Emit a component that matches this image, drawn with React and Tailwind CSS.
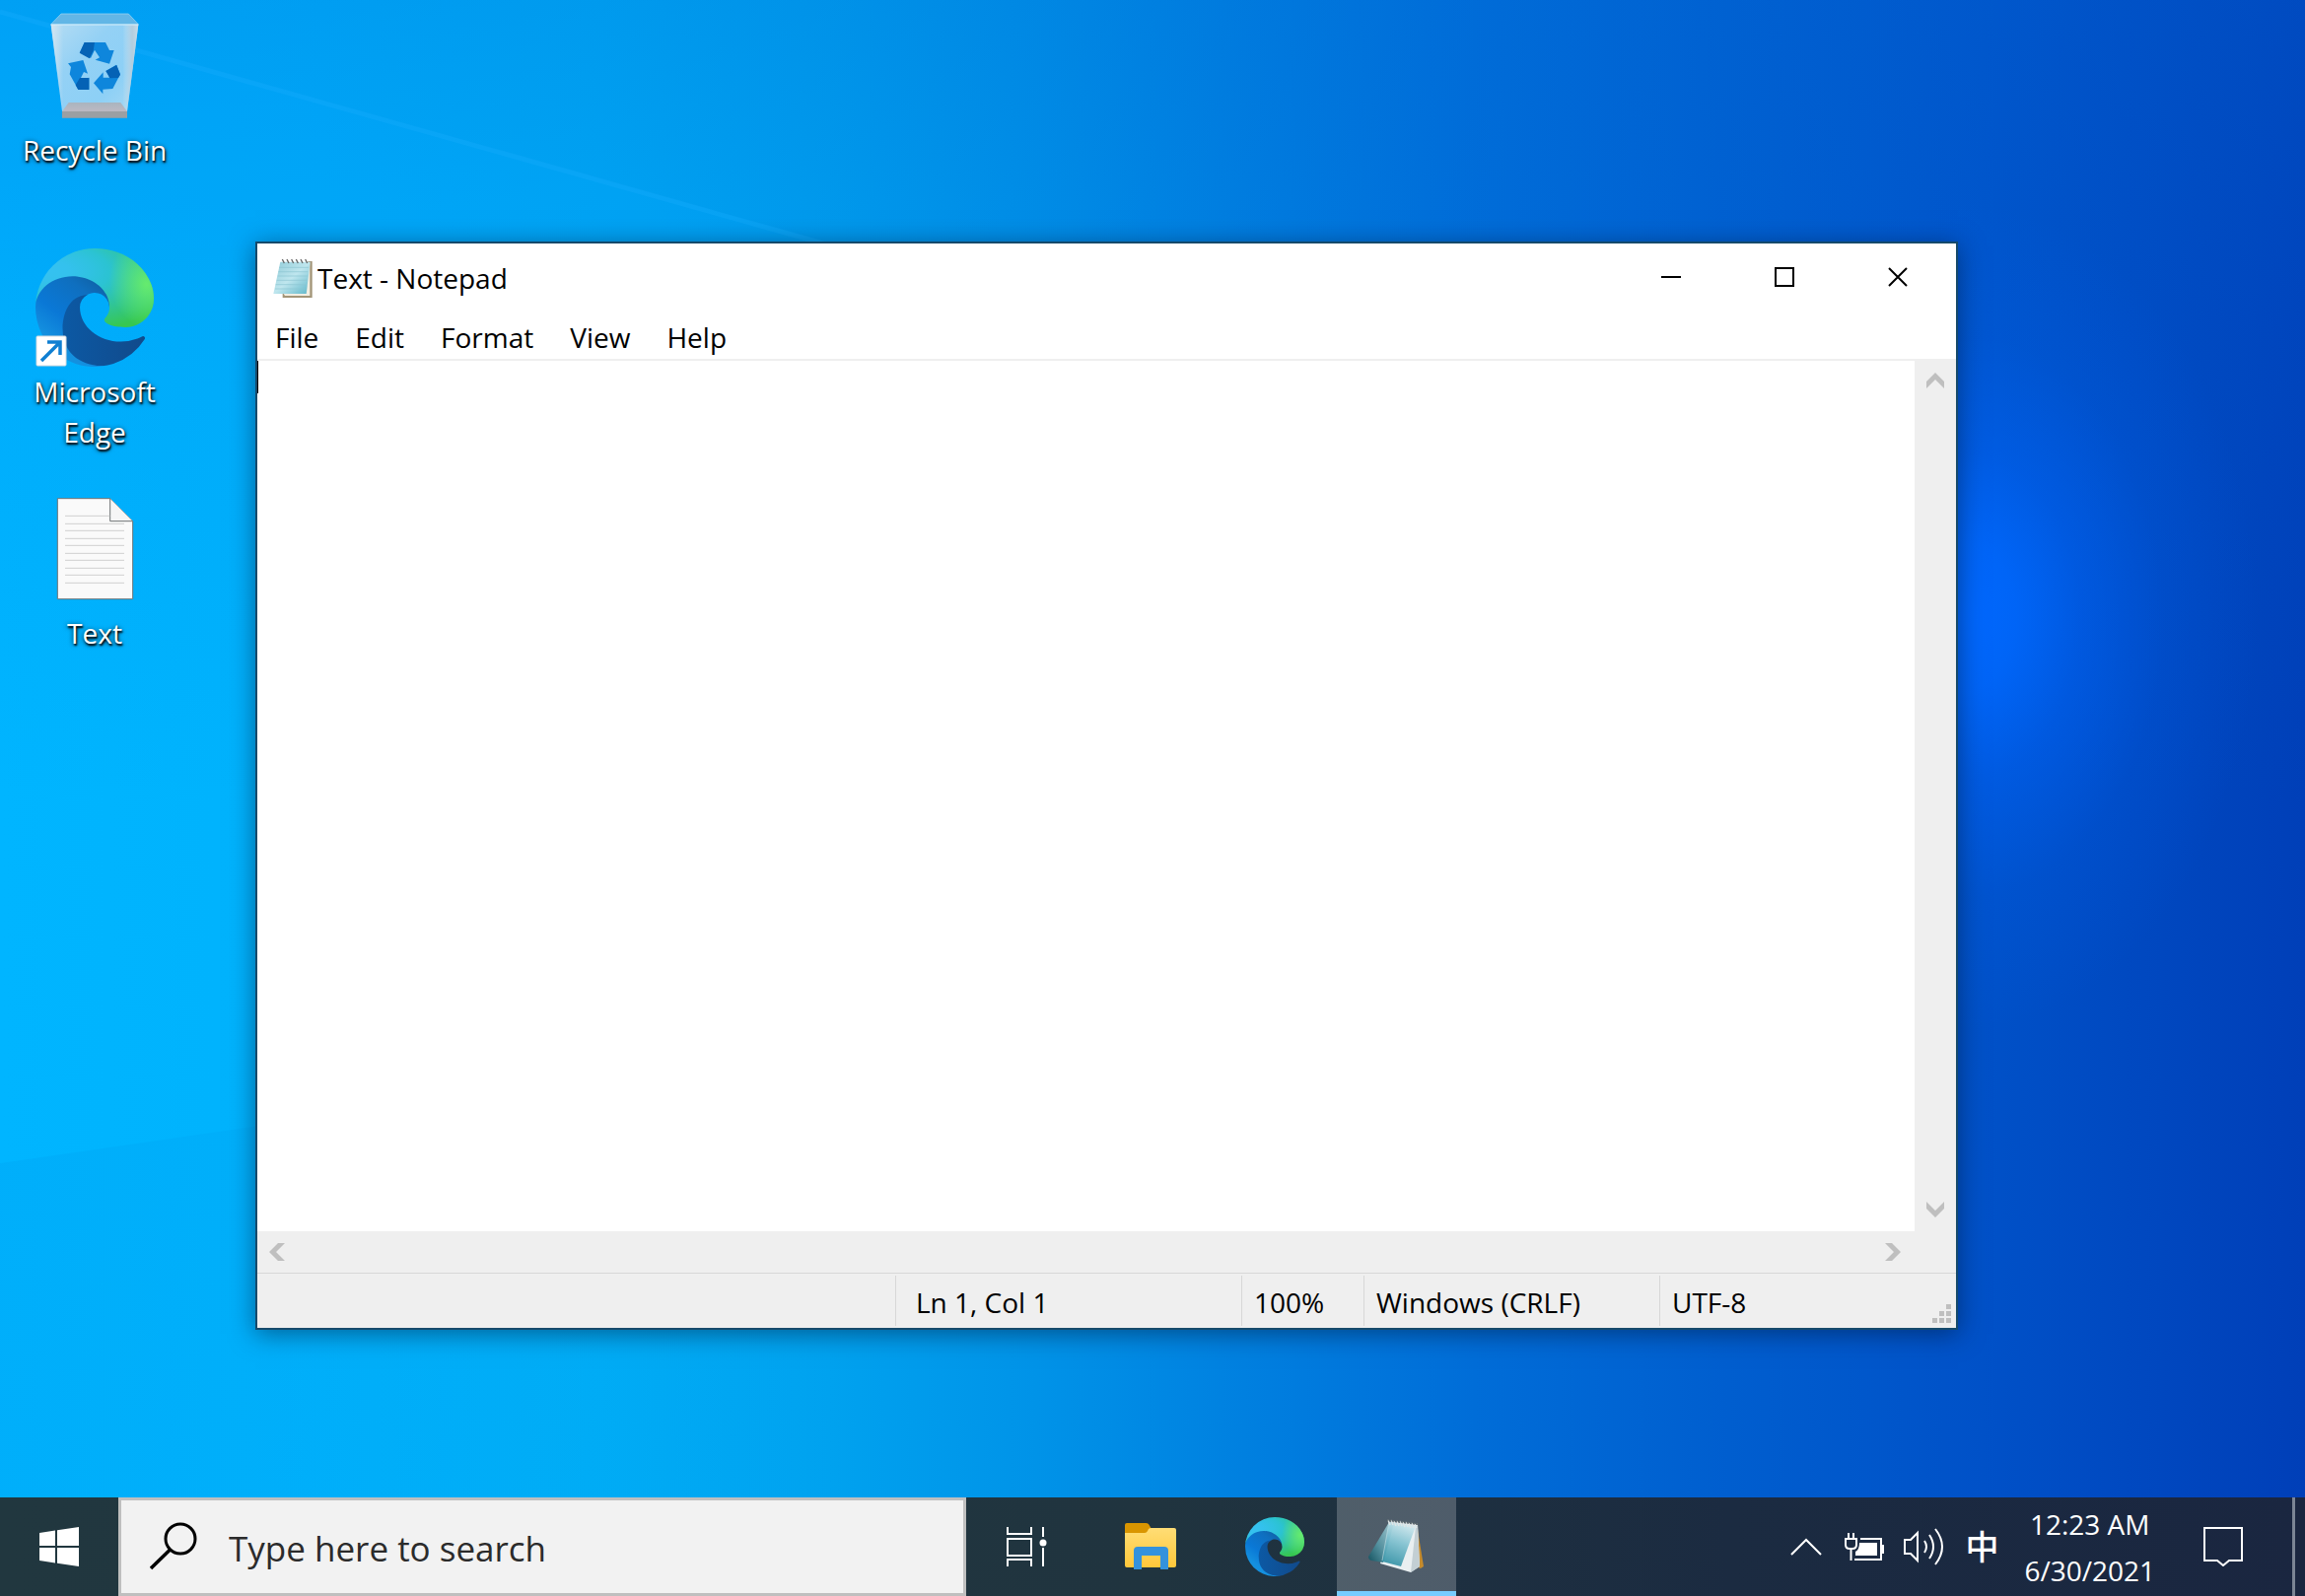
import React from "react";

function EdgeLogo({ id, className }) {
  return (
    <svg viewBox="0 0 256 256" className={className} aria-hidden="true">
      <defs>
        <linearGradient id={id + "a"} gradientUnits="userSpaceOnUse" x1="63" y1="178" x2="241" y2="178">
          <stop offset="0" stopColor="#0c59a4" />
          <stop offset="1" stopColor="#114a8b" />
        </linearGradient>
        <linearGradient id={id + "c"} gradientUnits="userSpaceOnUse" x1="157.4" y1="65" x2="46" y2="208">
          <stop offset="0" stopColor="#0f5c9c" />
          <stop offset=".3" stopColor="#0f6fbf" />
          <stop offset=".7" stopColor="#0a78d6" />
          <stop offset="1" stopColor="#1490df" />
        </linearGradient>
        <radialGradient
          id={id + "d"}
          gradientUnits="userSpaceOnUse"
          cx="113.4"
          cy="570.2"
          r="202.4"
          gradientTransform="matrix(-.04 1 2.13 .08 -1179.5 -106.7)"
        >
          <stop offset="0" stopColor="#35c1f1" />
          <stop offset=".11" stopColor="#34c1ed" />
          <stop offset=".23" stopColor="#2fc2df" />
          <stop offset=".31" stopColor="#2bc3d2" />
          <stop offset=".67" stopColor="#36c752" />
        </radialGradient>
        <radialGradient
          id={id + "e"}
          gradientUnits="userSpaceOnUse"
          cx="376.5"
          cy="568"
          r="97.3"
          gradientTransform="matrix(.28 .96 .78 -.23 -303.8 -148.5)"
        >
          <stop offset="0" stopColor="#66eb6e" />
          <stop offset="1" stopColor="#66eb6e" stopOpacity="0" />
        </radialGradient>
      </defs>
      <g transform="translate(-4.63 -4.92)">
        <path
          fill={"url(#" + id + "c)"}
          d="M110.34 246.34A79.2 79.2 0 0 1 87.6 225a80.72 80.72 0 0 1 29.53-120c3.12-1.47 8.45-4.13 15.54-4a32.35 32.35 0 0 1 25.69 13 31.88 31.88 0 0 1 6.36 18.66c0-.21 24.46-79.6-80-79.6-43.9 0-80 41.66-80 78.21a130.15 130.15 0 0 0 12.11 56 128 128 0 0 0 156.38 67.11 75.55 75.55 0 0 1-62.78-8Z"
        />
        <path
          fill={"url(#" + id + "a)"}
          d="M235.68 195.46a93.73 93.73 0 0 1-10.54 4.71 101.87 101.87 0 0 1-35.9 6.46c-47.32 0-88.54-32.55-88.54-74.32A31.48 31.48 0 0 1 117.13 105c-42.8 1.8-53.8 46.4-53.8 72.53 0 73.88 68.09 81.37 82.76 81.37 7.91 0 19.84-2.3 27-4.56l1.31-.44a128.34 128.34 0 0 0 66.6-52.8 4 4 0 0 0-5.32-5.64Z"
        />
        <path
          fill={"url(#" + id + "d)"}
          d="M156.94 153.78c-.81 1.05-3.3 2.5-3.3 5.66 0 2.61 1.7 5.12 4.72 7.23 14.38 10 41.49 8.68 41.56 8.68a59.56 59.56 0 0 0 30.27-8.35 61.38 61.38 0 0 0 30.43-52.88c.26-22.41-8-37.31-11.34-43.91-21.19-41.44-66.92-65.28-116.64-65.28a128 128 0 0 0-128 126.2c.48-36.54 36.8-66.05 80-66.05 3.5 0 23.46.34 42 10.07 16.34 8.58 24.9 18.94 30.85 29.21 6.18 10.67 7.28 24.15 7.28 29.52s-2.74 13.33-7.83 19.9Z"
        />
        <path
          fill={"url(#" + id + "e)"}
          d="M156.94 153.78c-.81 1.05-3.3 2.5-3.3 5.66 0 2.61 1.7 5.12 4.72 7.23 14.38 10 41.49 8.68 41.56 8.68a59.56 59.56 0 0 0 30.27-8.35 61.38 61.38 0 0 0 30.43-52.88c.26-22.41-8-37.31-11.34-43.91-21.19-41.44-66.92-65.28-116.64-65.28a128 128 0 0 0-128 126.2c.48-36.54 36.8-66.05 80-66.05 3.5 0 23.46.34 42 10.07 16.34 8.58 24.9 18.94 30.85 29.21 6.18 10.67 7.28 24.15 7.28 29.52s-2.74 13.33-7.83 19.9Z"
        />
      </g>
    </svg>
  );
}

function RecycleBinIcon() {
  return (
    <svg viewBox="108 21 360 360" className="size-[120px]" aria-hidden="true">
      <defs>
        <linearGradient id="binFront" x1="0" y1="0" x2="1" y2="1">
          <stop offset="0" stopColor="#b4dcf3" />
          <stop offset=".35" stopColor="#94d1f5" />
          <stop offset=".7" stopColor="#8dd0f6" />
          <stop offset="1" stopColor="#a9d9f2" />
        </linearGradient>
        <linearGradient id="binEdge" x1="0" y1="0" x2="1" y2="0">
          <stop offset="0" stopColor="#d6e6f0" stopOpacity=".9" />
          <stop offset=".14" stopColor="#d6e6f0" stopOpacity="0" />
          <stop offset=".82" stopColor="#d6e6f0" stopOpacity="0" />
          <stop offset=".93" stopColor="#b6cddc" stopOpacity=".9" />
          <stop offset="1" stopColor="#c6dce9" />
        </linearGradient>
        <linearGradient id="binBase" x1="0" y1="0" x2="0" y2="1">
          <stop offset="0" stopColor="#a9b4bf" />
          <stop offset="1" stopColor="#bcb9c2" />
        </linearGradient>
      </defs>
      <path d="M186 42h205l30 32H155z" fill="#62b6e6" stroke="#a5d8f3" strokeWidth="2" />
      <path d="M155 75h266l-34 264H189z" fill="url(#binFront)" />
      <path d="M155 75h266l-34 264H189z" fill="url(#binEdge)" />
      <path d="M155 75h266" stroke="#d9f0fb" strokeWidth="3" />
      <path d="M209 312h158l20 27H189z" fill="url(#binBase)" />
      <path d="M189 339h198v20H189z" fill="#9b9fa3" />
      <g fill="#0e86dc">
        <path d="M257 129h64l12 24 14 0-14 41-43-12 13-7-15-23-12 25-33-17z" />
        <path d="M207 193l46-10 14 41-12-5-12 24 28-7v36h-33l-26-46 4-22z" />
        <path d="M285 253l29-33v16h22l-14-20 32-19 12 29-23 44-30 2v14z" />
      </g>
      <g fill="#0562b5">
        <path d="M257 129h31l-4 25-12 24-30-17z" />
        <path d="M243 237h28v36h-33l-8-14z" />
        <path d="M322 216l33-18 11 29-6 10-26 1z" />
      </g>
    </svg>
  );
}

function TextFileIcon() {
  const lines = [574, 595, 619, 640, 664, 685, 709, 730, 754];
  return (
    <svg viewBox="108 471 360 360" className="size-[120px]" aria-hidden="true">
      <path d="M175 497h160l69 69v237H175z" fill="#fafafa" stroke="#6f7375" strokeWidth="3" />
      <path d="M335 497v69h69" fill="#f6f6f6" stroke="#6f7375" strokeWidth="3" />
      <path d="M198 550h136" stroke="#d0d0d0" strokeWidth="3" />
      {lines.map((y) => (
        <path key={y} d={"M198 " + y + "h180"} stroke="#d0d0d0" strokeWidth="3" />
      ))}
    </svg>
  );
}

function NotepadSmallIcon() {
  return (
    <svg viewBox="82 77 120 120" className="size-10" aria-hidden="true">
      <defs>
        <linearGradient id="npSmall" x1="0" y1="0" x2="1" y2="1">
          <stop offset="0" stopColor="#8fcbd8" />
          <stop offset=".5" stopColor="#bfe6ee" />
          <stop offset="1" stopColor="#5db5c8" />
        </linearGradient>
      </defs>
      <path d="M188 86h13v111h-90v-12h70z" fill="#a39578" />
      <path d="M186 90h8v101h-76l-4-6h66z" fill="#f2eee2" />
      <path d="M104 88h91l-12 97H83z" fill="url(#npSmall)" />
      <g stroke="#8cc5d2" strokeWidth="2">
        <path d="M100 105h90M98 118h90M96 131h91M93 144h92M90 157h93M88 170h93" />
      </g>
      <g stroke="#666" strokeWidth="4" fill="none">
        <path d="M110 80l6 12M124 80l6 12M138 80l6 12M152 80l6 12M166 80l6 12M180 80l6 12" />
      </g>
    </svg>
  );
}

function NotepadLargeIcon() {
  return (
    <svg viewBox="0 0 60 60" className="size-[60px]" aria-hidden="true">
      <defs>
        <linearGradient id="npGlass" x1=".6" y1="0" x2=".3" y2="1">
          <stop offset="0" stopColor="#cfe8ee" />
          <stop offset=".45" stopColor="#7fc0cf" />
          <stop offset="1" stopColor="#2f8fa3" />
        </linearGradient>
        <linearGradient id="npDark" x1="1" y1="0" x2="0" y2="1">
          <stop offset="0" stopColor="#a9cdd6" />
          <stop offset=".6" stopColor="#528f9d" />
          <stop offset="1" stopColor="#15525f" />
        </linearGradient>
      </defs>
      <path d="M50 9l7 43-3 2-5-2z" fill="#c58b2c" />
      <path d="M24 7l27 3 2 42-9 6-31-9z" fill="#e9eff1" />
      <path d="M51 10l2 42-9 6 5-46z" fill="#c3cfd4" />
      <path d="M22 7L1 42q0 3 3 4l12 2L27 8z" fill="url(#npDark)" />
      <path d="M22 7l27 4-15 41-19-5z" fill="url(#npGlass)" opacity=".92" />
      <path d="M22 7L15 46" stroke="#c5e2e8" strokeWidth="1" opacity=".6" />
      <path d="M21 5l2 5M24 5l2 5M27 6l2 5M30 6l2 5M33 6l2 5M36 7l2 5M39 7l2 5M42 8l2 5M45 8l2 5M48 9l2 4" stroke="#dfe5e6" strokeWidth="1.5" />
      <path d="M20 5l31 4" stroke="#6a7476" strokeWidth="1.5" strokeDasharray="1.5 1.5" />
    </svg>
  );
}

function DesktopItem({ label, children }) {
  return (
    <button type="button" className="flex h-[245px] w-full flex-col items-center pt-[7px]">
      {children}
      <span className="mt-[5px] w-40 text-center text-[28px] leading-[41px] text-white [text-shadow:1px_2px_2px_#000,0_1px_5px_rgba(0,0,0,0.75)]">
        {label}
      </span>
    </button>
  );
}

const chevrons = {
  up: "M9 0l9 9v7l-9-9-9 9v-7z",
  down: "M9 16l9-9V0l-9 9-9-9v7z",
  left: "M0 9l9-9h7L7 9l9 9H9z",
  right: "M16 9L7 0H0l9 9-9 9h7z",
};

function ScrollButton({ dir, label }) {
  return (
    <button type="button" aria-label={label} className="flex size-[42px] shrink-0 items-center justify-center">
      <svg viewBox="0 0 18 18" className="size-[18px]">
        <path d={chevrons[dir]} fill="#bfbfbf" />
      </svg>
    </button>
  );
}

function CaptionButton({ label, children }) {
  return (
    <button type="button" aria-label={label} className="flex h-[68px] w-[115px] items-center justify-center">
      <svg viewBox="0 0 20 20" className="size-5" fill="none" stroke="#000" strokeWidth="2">
        {children}
      </svg>
    </button>
  );
}

function NotepadWindow() {
  return (
    <section
      aria-label="Text - Notepad"
      className="absolute top-[245px] right-[352px] bottom-[170px] left-[259px] flex flex-col border-2 border-[#164a6b] bg-white text-[28px] text-black shadow-[0_4px_24px_rgba(0,20,50,0.5)]"
    >
      <header className="flex h-[72px] shrink-0 items-start pr-0.5">
        <div className="flex h-[70px] flex-1 items-center gap-[5px] pl-4">
          <NotepadSmallIcon />
          <h1 className="leading-10">Text - Notepad</h1>
        </div>
        <CaptionButton label="Minimize">
          <path d="M0 10h20" />
        </CaptionButton>
        <CaptionButton label="Maximize">
          <path d="M1 1h18v18H1z" />
        </CaptionButton>
        <CaptionButton label="Close">
          <path d="M1 1l18 18M19 1L1 19" />
        </CaptionButton>
      </header>
      <nav className="flex h-[47px] shrink-0 gap-[37px] border-b-2 border-[#efefef] pl-[18px] leading-[46px]">
        {["File", "Edit", "Format", "View", "Help"].map((m) => (
          <button key={m} type="button">
            {m}
          </button>
        ))}
      </nav>
      <div className="flex min-h-0 flex-1 bg-[#efefef]">
        <div className="relative flex-1">
          <textarea aria-label="Text editor" className="block size-full resize-none bg-white outline-none" />
          <span className="absolute top-0 left-0 h-[33px] w-px bg-black" />
        </div>
        <div className="flex w-[42px] flex-col justify-between">
          <ScrollButton dir="up" label="Scroll up" />
          <ScrollButton dir="down" label="Scroll down" />
        </div>
      </div>
      <div className="flex h-[42px] shrink-0 justify-between bg-[#efefef] pr-[42px]">
        <ScrollButton dir="left" label="Scroll left" />
        <ScrollButton dir="right" label="Scroll right" />
      </div>
      <footer className="relative flex h-14 shrink-0 border-t border-[#d7d7d7] bg-[#efefef] py-0.5 leading-[54px]">
        <div className="flex-1" />
        <div className="w-[351px] border-l border-[#d7d7d7] pl-5">Ln 1, Col 1</div>
        <div className="w-[124px] border-l border-[#d7d7d7] pl-3">100%</div>
        <div className="w-[300px] border-l border-[#d7d7d7] pl-3">Windows (CRLF)</div>
        <div className="w-[301px] border-l border-[#d7d7d7] pl-3">UTF-8</div>
        <svg viewBox="0 0 19 19" className="absolute right-[5px] bottom-[5px] size-[19px]" fill="#bfbfbf" aria-hidden="true">
          <path d="M14 0h5v5h-5zM7 7h5v5H7zM14 7h5v5h-5zM0 14h5v5H0zM7 14h5v5H7zM14 14h5v5h-5z" />
        </svg>
      </footer>
    </section>
  );
}

function Wallpaper() {
  return (
    <div className="absolute inset-0 bg-[linear-gradient(to_right,#00b5ff_0%,#00b2fc_14%,#00adf6_26%,#00a2ef_36%,#0093e8_45%,#0080e0_54%,#006dd8_64%,#005ecf_75%,#0051c8_86%,#003fb8_100%)]">
      <div className="absolute inset-0 bg-[linear-gradient(to_bottom,rgba(0,105,215,0.28)_0%,rgba(0,110,225,0.12)_20%,rgba(0,110,225,0)_50%)]" />
      <div className="absolute inset-0 bg-[radial-gradient(300px_420px_at_1990px_625px,rgba(0,104,255,1)_0%,rgba(0,104,255,0.85)_18%,rgba(0,100,250,0.5)_40%,rgba(0,96,240,0.18)_68%,rgba(0,96,240,0)_100%)]" />
      <svg className="absolute inset-0 size-full" viewBox="0 0 2338 1619" preserveAspectRatio="none" aria-hidden="true">
        <defs>
          <linearGradient id="ray" x1="0" y1="0" x2="1" y2="0">
            <stop offset="0" stopColor="#00a0f0" stopOpacity=".3" />
            <stop offset="1" stopColor="#00a0f0" stopOpacity="0" />
          </linearGradient>
        </defs>
        <path d="M0 10L860 252H0z" fill="#00a8ff" opacity=".2" />
        <path d="M0 12L860 254" stroke="#22b0ff" strokeWidth="5" opacity=".25" />
        <path d="M0 1180L900 1050V1519H0z" fill="url(#ray)" />
      </svg>
    </div>
  );
}

function TaskButton({ label, active, children }) {
  return (
    <button
      type="button"
      aria-label={label}
      className={
        "flex h-full w-[121px] items-center justify-center " +
        (active ? "border-b-[5px] border-[#76ccff] bg-white/22" : "")
      }
    >
      {children}
    </button>
  );
}

function Taskbar() {
  return (
    <footer className="relative flex h-[100px] shrink-0 items-center bg-[linear-gradient(to_right,#21373f,#20343f_50%,#1b2b41_75%,#1a2640)] text-white">
      <button type="button" aria-label="Start" className="flex h-full w-[120px] items-center justify-center">
        <svg viewBox="0 0 40 40" className="size-10" fill="#fff">
          <path d="M0 6l16-2.4V19H0zM18 3.2L40 0v19H18zM0 21h16v15.4L0 34zM18 21h22v19l-22-3.2z" />
        </svg>
      </button>
      <label className="flex h-full w-[860px] items-center border-3 border-[#bfbfbf] bg-[#f2f2f2] pl-[29px]">
        <svg viewBox="0 0 50 50" className="size-[50px]" fill="none" stroke="#000" strokeWidth="3">
          <circle cx="31" cy="17" r="15" />
          <path d="M20.500 28L1 47" strokeWidth="3.500" />
        </svg>
        <input
          type="text"
          aria-label="Search"
          placeholder="Type here to search"
          className="ml-[30px] min-w-0 flex-1 bg-transparent pt-1 text-[35px] text-black outline-none placeholder:text-[#2b2b2b]"
        />
      </label>
      <div className="mr-[3px] flex h-full gap-[5px]">
        <TaskButton label="Task View">
          <svg viewBox="0 0 42 40" className="h-10 w-[42px]" fill="none" stroke="#fff" strokeWidth="2">
            <path d="M2 0v7h24V0M2 40v-7h24v7M2 12h24v17H2zM38 0v10M38 21v19" />
            <circle cx="38" cy="16" r="3.500" fill="#fff" stroke="none" />
          </svg>
        </TaskButton>
        <TaskButton label="File Explorer">
          <svg viewBox="0 0 54 48" className="h-12 w-[54px]">
            <defs>
              <linearGradient id="folder" x1="0" y1="0" x2="0" y2="1">
                <stop offset="0" stopColor="#ffdd75" />
                <stop offset="1" stopColor="#ffc73a" />
              </linearGradient>
            </defs>
            <path d="M1 2q0-2 2-2h19q2 0 3 1l3 5-3 9H1z" fill="#d99500" />
            <path d="M1 10h20q2 0 3-2l1-2q1-1 3-1h23q2 0 2 2v36q0 2-2 2H3q-2 0-2-2z" fill="url(#folder)" />
            <path d="M10 47V28q0-4 4-4h27q4 0 4 4v19h-8V33H18v14z" fill="#3492dc" />
          </svg>
        </TaskButton>
        <TaskButton label="Microsoft Edge">
          <EdgeLogo id="te" className="size-[60px]" />
        </TaskButton>
      </div>
      <TaskButton label="Text - Notepad" active>
        <NotepadLargeIcon />
      </TaskButton>

      <div className="ml-auto flex h-full items-center">
        <button type="button" aria-label="Show hidden icons" className="mr-[23px]">
          <svg viewBox="0 0 32 18" className="h-[18px] w-8" fill="none" stroke="#fff" strokeWidth="2">
            <path d="M1 17L16 2l15 15" />
          </svg>
        </button>
        <button type="button" aria-label="Battery charging" className="mr-5">
          <svg viewBox="0 0 40 28" className="h-7 w-10" fill="none" stroke="#fff" strokeWidth="2">
            <path d="M4 0v6M9 0v6M1 6h11v6q0 4-4 4H5q-4 0-4-4zM6.500 16v12" />
            <path d="M16 6h21v21H10" />
            <path d="M15 10h18v13H11v-4q4-2 4-9z" fill="#fff" stroke="none" />
            <path d="M38 12h2v9h-2z" fill="#fff" stroke="none" />
          </svg>
        </button>
        <button type="button" aria-label="Volume" className="mr-5">
          <svg viewBox="0 0 42 38" className="h-[38px] w-[42px]" fill="none" stroke="#fff" strokeWidth="2">
            <path d="M1 12h6l7-7v28l-7-7H1z" />
            <path d="M21 13q4 6 0 12M26 7q8 12 0 24M32 1q14 18 0 36" />
          </svg>
        </button>
        <button type="button" aria-label="Input language" className="mr-[26px] pb-0.5 font-['Noto_Sans_CJK_SC',sans-serif] text-[34px] leading-10 font-medium">
          中
        </button>
        <button type="button" className="mr-[49px] flex flex-col pt-0.5 text-center text-[28px] leading-[47px]">
          <span>12:23 AM</span>
          <span>6/30/2021</span>
        </button>
        <button type="button" aria-label="Action center" className="mr-[50px]">
          <svg viewBox="0 0 40 40" className="size-10" fill="none" stroke="#fff" strokeWidth="2">
            <path d="M1 1h38v33H26l-6 5-6-5H1z" />
          </svg>
        </button>
        <button type="button" aria-label="Show desktop" className="h-full w-[13px] border-l-3 border-[#7b8595]" />
      </div>
    </footer>
  );
}

export default function App() {
  return (
    <div className="relative flex h-screen flex-col overflow-hidden font-['Open_Sans','Noto_Sans',sans-serif]">
      <Wallpaper />
      <main className="relative min-h-0 flex-1">
        <div className="flex w-[192px] flex-col">
          <DesktopItem label="Recycle Bin">
            <RecycleBinIcon />
          </DesktopItem>
          <DesktopItem label="Microsoft Edge">
            <span className="relative">
              <EdgeLogo id="de" className="size-[120px]" />
              <svg viewBox="0 0 32 32" className="absolute bottom-0 left-0 size-8" aria-hidden="true">
                <rect x="1" y="1" width="30" height="30" rx="1" fill="#fff" stroke="#d5dbe0" />
                <path d="M6 26L24 8M12 7h13v13" fill="none" stroke="#0f7fd2" strokeWidth="3.500" />
              </svg>
            </span>
          </DesktopItem>
          <DesktopItem label="Text">
            <TextFileIcon />
          </DesktopItem>
        </div>
        <NotepadWindow />
      </main>
      <Taskbar />
    </div>
  );
}
